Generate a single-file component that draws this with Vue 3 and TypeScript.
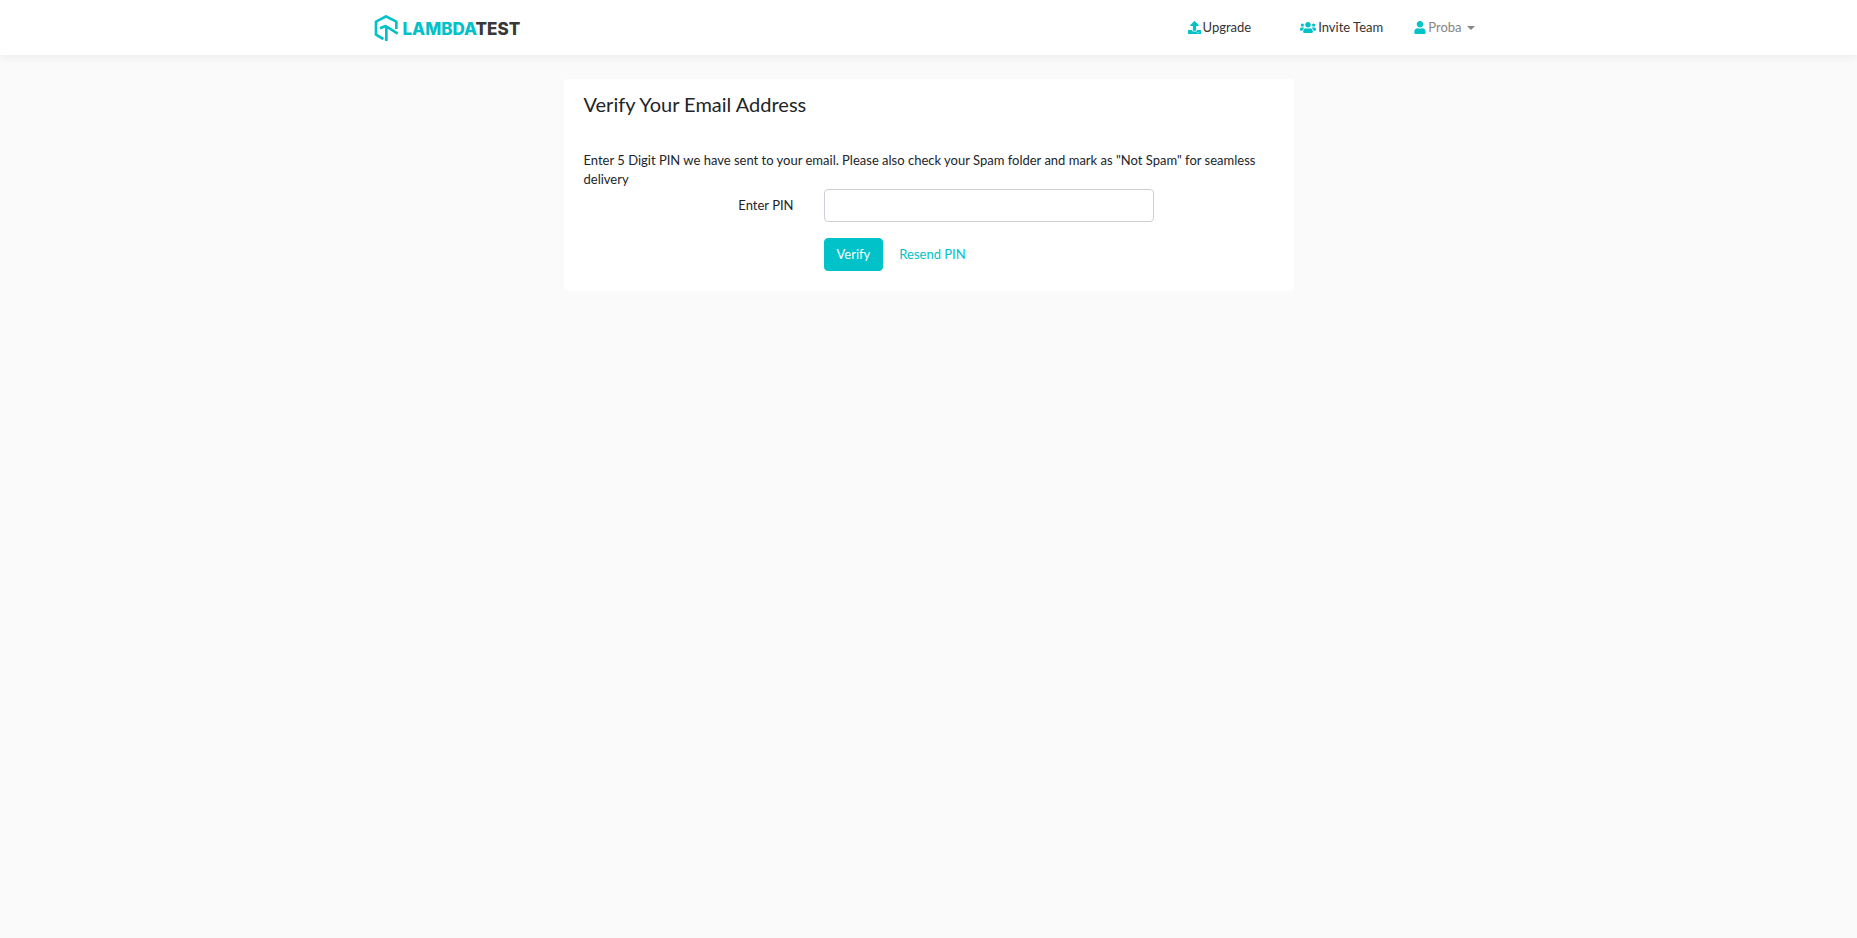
<script setup lang="ts">
import { ref } from 'vue'

const pin = ref('')
const userName = 'Proba'
</script>

<template>
  <div class="page">
    <header class="topbar">
      <div class="container topbar-inner">
        <a href="#" class="brand" aria-label="LambdaTest home">
          <svg class="brand-mark" viewBox="0 0 72 78" fill="none" stroke="#00c2c8" stroke-width="8" stroke-linejoin="round" aria-hidden="true">
            <path d="M28 72 L6 59 V20 L36 4 L67 20 V42" />
            <path d="M18 40 L35 33 L71 56 M37 34 V78" />
          </svg>
          <span class="brand-name">LAMBDA<span class="brand-dark">TEST</span></span>
        </a>
        <nav class="nav">
          <a href="#" class="nav-link">
            <svg class="icon upload" viewBox="0 0 512 512" fill="currentColor" aria-hidden="true">
              <path d="M296 384h-80c-13.300 0-24-10.700-24-24V192h-87.700c-17.800 0-26.700-21.500-14.100-34.100L242.300 5.700c7.500-7.500 19.800-7.500 27.300 0l152.200 152.200c12.600 12.600 3.700 34.100-14.100 34.100H320v168c0 13.300-10.700 24-24 24zm216-8v112c0 13.300-10.700 24-24 24H24c-13.300 0-24-10.700-24-24V376c0-13.300 10.700-24 24-24h136v8c0 30.900 25.100 56 56 56h80c30.900 0 56-25.100 56-56v-8h136c13.300 0 24 10.700 24 24zm-124 88c0-11-9-20-20-20s-20 9-20 20 9 20 20 20 20-9 20-20zm64 0c0-11-9-20-20-20s-20 9-20 20 9 20 20 20 20-9 20-20z" />
            </svg>
            <span>Upgrade</span>
          </a>
          <a href="#" class="nav-link invite">
            <svg class="icon users" viewBox="0 0 640 512" fill="currentColor" aria-hidden="true">
              <path d="M96 224c35.300 0 64-28.700 64-64s-28.700-64-64-64-64 28.700-64 64 28.700 64 64 64zm448 0c35.300 0 64-28.700 64-64s-28.700-64-64-64-64 28.700-64 64 28.700 64 64 64zm32 32h-64c-17.600 0-33.500 7.100-45.100 18.600 40.300 22.100 68.900 62 75.100 109.400h66c17.700 0 32-14.300 32-32v-32c0-35.300-28.700-64-64-64zm-256 0c61.900 0 112-50.100 112-112S381.900 32 320 32 208 82.100 208 144s50.100 112 112 112zm76.800 32h-8.300c-20.800 10-43.900 16-68.500 16s-47.600-6-68.500-16h-8.300C179.600 288 128 339.600 128 403.200V432c0 26.500 21.500 48 48 48h288c26.500 0 48-21.500 48-48v-28.800c0-63.600-51.600-115.200-115.200-115.200zm-223.700-13.400C161.500 263.100 145.600 256 128 256H64c-35.300 0-64 28.700-64 64v32c0 17.700 14.300 32 32 32h65.900c6.300-47.400 34.900-87.300 75.200-109.400z" />
            </svg>
            <span>Invite Team</span>
          </a>
          <button type="button" class="nav-link account" aria-haspopup="menu">
            <svg class="icon user" viewBox="0 0 448 512" fill="currentColor" aria-hidden="true">
              <path d="M224 256c70.700 0 128-57.300 128-128S294.700 0 224 0 96 57.300 96 128s57.300 128 128 128zm89.600 32h-16.700c-22.200 10.200-46.900 16-72.900 16s-50.600-5.800-72.900-16h-16.700C60.200 288 0 348.200 0 422.400V464c0 26.500 21.500 48 48 48h352c26.500 0 48-21.500 48-48v-41.600c0-74.200-60.200-134.400-134.400-134.400z" />
            </svg>
            <span>{{ userName }}</span>
            <span class="caret"></span>
          </button>
        </nav>
      </div>
    </header>

    <main class="container">
      <section class="card">
        <h1 class="title">Verify Your Email Address</h1>
        <p class="message">
          Enter 5 Digit PIN we have sent to your email. Please also check your Spam folder and mark as "Not Spam" for seamless delivery
        </p>
        <form class="form" @submit.prevent>
          <label for="pin" class="label">Enter PIN</label>
          <input id="pin" v-model="pin" type="text" class="input" />
          <div class="actions">
            <button type="submit" class="verify">Verify</button>
            <a href="#" class="resend">Resend PIN</a>
          </div>
        </form>
      </section>
    </main>
  </div>
</template>

<style>
body {
  margin: 0;
  background: #fafafa;
}
</style>

<style scoped>
.page,
.page * {
  box-sizing: border-box;
}
.page {
  font-family: Lato, "Liberation Sans", sans-serif;
  font-size: 13px;
  line-height: 19px;
  color: #212529;
}
.page a {
  text-decoration: none;
}
.topbar {
  background: #fff;
  box-shadow: 0 2px 8px rgba(0, 0, 0, 0.06);
}
.container {
  max-width: 1140px;
  margin: 0 auto;
  padding: 0 15px;
}
.topbar-inner {
  display: flex;
  align-items: center;
  justify-content: space-between;
  height: 55px;
  padding-right: 24px;
}
.brand {
  display: flex;
  align-items: center;
  gap: 5px;
}
.page .brand {
  color: #00c2c8;
}
.brand-mark {
  width: 24px;
  height: 26px;
}
.brand-name {
  padding-top: 3px;
  font-family: Inter, Roboto, sans-serif;
  font-size: 17px;
  font-weight: 800;
}
.brand-dark {
  color: #383838;
}
.nav {
  display: flex;
  align-items: center;
}
.nav-link {
  display: flex;
  align-items: center;
  gap: 2px;
  color: #333;
}
.invite {
  margin-left: 49px;
}
.account {
  margin-left: 31px;
  padding: 0;
  border: 0;
  background: none;
  font: inherit;
  color: #868686;
  cursor: pointer;
}
.icon {
  height: 13px;
  color: #00c2c8;
}
.upload {
  width: 13px;
}
.users {
  width: 16px;
}
.user {
  width: 12px;
}
.caret {
  margin-left: 3px;
  border: 4px solid transparent;
  border-top-color: currentColor;
  border-bottom: 0;
}
.card {
  max-width: 730px;
  margin: 24px auto 0;
  padding: 13px 20px 20px;
  border-radius: 4px;
  background: #fff;
}
.title {
  margin: 0 0 35px;
  font-size: 20px;
  line-height: 24px;
  font-weight: 400;
}
.message {
  margin: 0;
}
.form {
  display: grid;
  grid-template-columns: 210px minmax(0, 330px);
  column-gap: 30px;
  row-gap: 16px;
  align-items: center;
}
.label {
  text-align: right;
}
.input {
  width: 100%;
  height: 33px;
  padding: 6px 12px;
  border: 1px solid #cfcfda;
  border-radius: 4px;
  background: #fff;
  font: inherit;
  color: #495057;
}
.actions {
  grid-column: 2;
  display: flex;
  align-items: center;
  gap: 16px;
}
.verify {
  height: 33px;
  padding: 0 12px;
  border: 1px solid #00c2c8;
  border-radius: 4px;
  background: #00c2c8;
  font: inherit;
  color: #fff;
  cursor: pointer;
}
.resend {
  color: #00c2c8;
}
</style>
